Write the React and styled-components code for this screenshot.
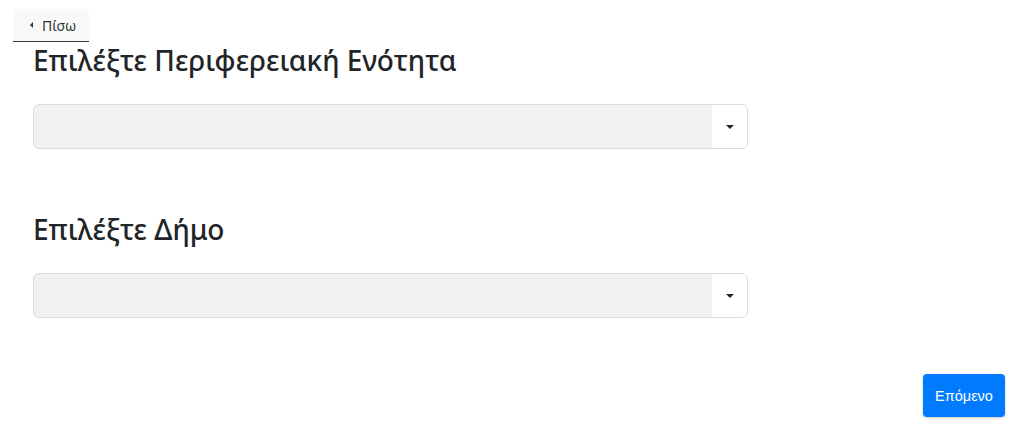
import React from "react";
import styled, { createGlobalStyle } from "styled-components";

const Global = createGlobalStyle`
  html, body { margin: 0; padding: 0; background: #fff; }
  body { font-family: "Noto Sans", "Open Sans", sans-serif; color: #212529; }
  * { box-sizing: border-box; }
`;

const Page = styled.div`
  width: 1035px;
  height: 440px;
  padding: 9px 30px 0 13px;
  display: flex;
  flex-direction: column;
`;

const BackButton = styled.button`
  align-self: flex-start;
  height: 33px;
  padding: 0 13px 0 17px;
  display: flex;
  align-items: center;
  gap: 9px;
  background: #f8f9fa;
  border: none;
  border-bottom: 1px solid #343a40;
  border-radius: 3px 3px 0 0;
  font-family: "Noto Sans", sans-serif;
  font-size: 14px;
  color: #333;
  cursor: pointer;
`;

const Caret = styled.span`
  width: 0;
  height: 0;
  border-top: 3px solid transparent;
  border-bottom: 3px solid transparent;
  border-right: 3px solid #333;
`;

const Form = styled.div`
  padding-left: 20px;
  display: flex;
  flex-direction: column;
`;

const Field = styled.div`
  display: flex;
  flex-direction: column;
  margin-bottom: ${(p) => p.$gap}px;
`;

const Heading = styled.h2`
  margin: 1px 0 ${(p) => p.$after}px;
  font-family: "Noto Sans", sans-serif;
  font-weight: 500;
  font-size: 28px;
  line-height: 34px;
  color: #212529;
`;

const Select = styled.div`
  width: 715px;
  height: 45px;
  display: flex;
  border: 1px solid #dcdcdc;
  border-radius: 6px;
  overflow: hidden;
  background: #f1f1f1;
`;

const SelectValue = styled.div`
  flex: 1;
`;

const SelectArrow = styled.div`
  width: 35px;
  background: #fff;
  display: flex;
  align-items: center;
  justify-content: center;
`;

const Down = styled.span`
  width: 0;
  height: 0;
  border-left: 4px solid transparent;
  border-right: 4px solid transparent;
  border-top: 4px solid #222;
  margin-left: 1px;
`;

const Footer = styled.div`
  display: flex;
  justify-content: flex-end;
`;

const NextButton = styled.button`
  width: 82px;
  height: 43px;
  background: #007bff;
  color: #fff;
  border: none;
  border-radius: 4px;
  font-family: "Liberation Sans", Arial, sans-serif;
  font-size: 14.5px;
  box-shadow: 0 1px 3px rgba(0,0,0,0.2);
  cursor: pointer;
`;

function Dropdown() {
  return (
    <Select>
      <SelectValue />
      <SelectArrow>
        <Down />
      </SelectArrow>
    </Select>
  );
}

export default function App() {
  return (
    <>
      <Global />
      <Page>
        <BackButton>
          <Caret />
          Πίσω
        </BackButton>
        <Form>
          <Field $gap={62}>
            <Heading $after={27}>Επιλέξτε Περιφερειακή Ενότητα</Heading>
            <Dropdown />
          </Field>
          <Field $gap={56}>
            <Heading $after={27}>Επιλέξτε Δήμο</Heading>
            <Dropdown />
          </Field>
        </Form>
        <Footer>
          <NextButton>Επόμενο</NextButton>
        </Footer>
      </Page>
    </>
  );
}
